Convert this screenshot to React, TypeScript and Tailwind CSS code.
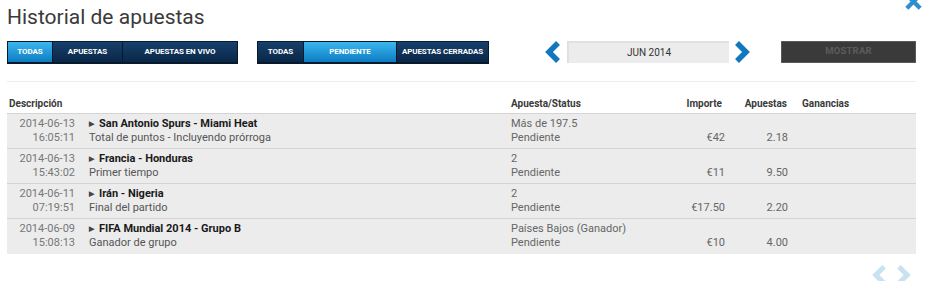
import React from "react";

const font = { fontFamily: "Roboto, 'Liberation Sans', sans-serif" };

type Row = {
  date: string;
  time: string;
  title: string;
  desc: string;
  pick: string;
  status: string;
  amount: string;
  odds: string;
};

const rows: Row[] = [
  { date: "2014-06-13", time: "16:05:11", title: "San Antonio Spurs - Miami Heat", desc: "Total de puntos - Incluyendo prórroga", pick: "Más de 197.5", status: "Pendiente", amount: "€42", odds: "2.18" },
  { date: "2014-06-13", time: "15:43:02", title: "Francia - Honduras", desc: "Primer tiempo", pick: "2", status: "Pendiente", amount: "€11", odds: "9.50" },
  { date: "2014-06-11", time: "07:19:51", title: "Irán - Nigeria", desc: "Final del partido", pick: "2", status: "Pendiente", amount: "€17.50", odds: "2.20" },
  { date: "2014-06-09", time: "15:08:13", title: "FIFA Mundial 2014 - Grupo B", desc: "Ganador de grupo", pick: "Países Bajos (Ganador)", status: "Pendiente", amount: "€10", odds: "4.00" },
];

function Seg({ label, active, w }: { label: string; active?: boolean; w: string }) {
  return (
    <div
      className={`${w} h-full flex items-center justify-center text-[8px] font-bold text-white tracking-[-0.1px] border-r border-[#07192c] last:border-r-0 ${
        active
          ? "bg-gradient-to-b from-[#3ab8ee] to-[#0a7cc2]"
          : "bg-gradient-to-b from-[#17406c] to-[#0a2747]"
      }`}
    >
      {label}
    </div>
  );
}

function Chevron({ dir, color, className }: { dir: "l" | "r"; color: string; className?: string }) {
  return (
    <svg viewBox="0 0 18 24" className={className}>
      <polyline
        points={dir === "l" ? "14,3 5,12 14,21" : "4,3 13,12 4,21"}
        fill="none"
        stroke={color}
        strokeWidth="5.5"
        strokeLinejoin="miter"
      />
    </svg>
  );
}

const cols = "grid grid-cols-[68px_436px_150px_64px_63px_128px]";

export default function App() {
  return (
    <div className="relative w-[926px] h-[281px] bg-white overflow-hidden text-[#333]" style={font}>
      <svg viewBox="0 0 20 20" className="absolute right-[3px] top-[-8px] w-[19px] h-[19px]">
        <path d="M3 3 L17 17 M17 3 L3 17" stroke="#2e8fd0" strokeWidth="4.5" />
      </svg>

      <h1 className="pl-[7px] pt-[3px] text-[21px] leading-[28px] text-[#3a3a3a] font-normal">
        Historial de apuestas
      </h1>

      <div className="flex items-center mt-[9px] pl-[7px] h-[23px]">
        <div className="flex h-[22px] border border-[#07192c] shadow-[0_1px_0_#0a1a2c]">
          <Seg label="TODAS" active w="w-[45px]" />
          <Seg label="APUESTAS" w="w-[70px]" />
          <Seg label="APUESTAS EN VIVO" w="w-[114px]" />
        </div>
        <div className="flex h-[22px] ml-[19px] border border-[#07192c] shadow-[0_1px_0_#0a1a2c]">
          <Seg label="TODAS" w="w-[46px]" />
          <Seg label="PENDIENTE" active w="w-[93px]" />
          <Seg label="APUESTAS CERRADAS" w="w-[91px]" />
        </div>
        <Chevron dir="l" color="#0f78be" className="ml-[55px] w-[18px] h-[24px]" />
        <div className="ml-[5px] w-[162px] h-[22px] bg-[#ececec] border-t-2 border-l-2 border-[#e0e0e0] flex items-center justify-center text-[10px] text-[#333]">
          JUN 2014
        </div>
        <Chevron dir="r" color="#0f78be" className="ml-[4px] w-[18px] h-[24px]" />
        <div className="ml-[30px] w-[135px] h-[22px] bg-[#3a3a3a] border border-[#5a5a5a] flex items-center justify-center text-[9.5px] font-bold text-[#5c5c5c] tracking-[0.2px]">
          MOSTRAR
        </div>
      </div>

      <div className="mx-[7px] mt-[18px] w-[909px] border-t border-[#ececec]" />

      <div className={`mx-[7px] w-[909px] mt-[14px] ${cols} text-[10px] font-bold text-[#3a3a3a] h-[17px] items-start`}>
        <div className="pl-[2px] whitespace-nowrap">Descripción</div>
        <div />
        <div>Apuesta/Status</div>
        <div className="text-right pr-[3px]">Importe</div>
        <div className="text-right pr-[1px]">Apuestas</div>
        <div className="pl-[14px]">Ganancias</div>
      </div>

      <div className="mx-[7px] w-[909px] bg-[#ececec] border-t border-[#d4d4d4]">
        {rows.map((r, i) => (
          <div
            key={i}
            className={`${cols} h-[35px] border-b border-[#d4d4d4] last:border-b-0 pt-[3px] text-[11px] leading-[14px]`}
          >
            <div className="text-right text-[#777]">
              <div>{r.date}</div>
              <div>{r.time}</div>
            </div>
            <div className="pl-[14px]">
              <div className="flex items-center font-bold text-[#1a1a1a]">
                <span className="text-[7px] text-[#444] mr-[5px]">▶</span>
                {r.title}
              </div>
              <div className="text-[#555]">{r.desc}</div>
            </div>
            <div className="text-[#666] whitespace-nowrap">
              <div>{r.pick}</div>
              <div>{r.status}</div>
            </div>
            <div className="text-right text-[#666] pt-[14px]">{r.amount}</div>
            <div className="text-right text-[#666] pt-[14px]">{r.odds}</div>
            <div />
          </div>
        ))}
      </div>

      <div className="flex justify-end pr-[14px] mt-[10px]">
        <Chevron dir="l" color="#c8e2f2" className="w-[17px] h-[22px]" />
        <Chevron dir="r" color="#c8e2f2" className="ml-[7px] w-[17px] h-[22px]" />
      </div>
    </div>
  );
}
